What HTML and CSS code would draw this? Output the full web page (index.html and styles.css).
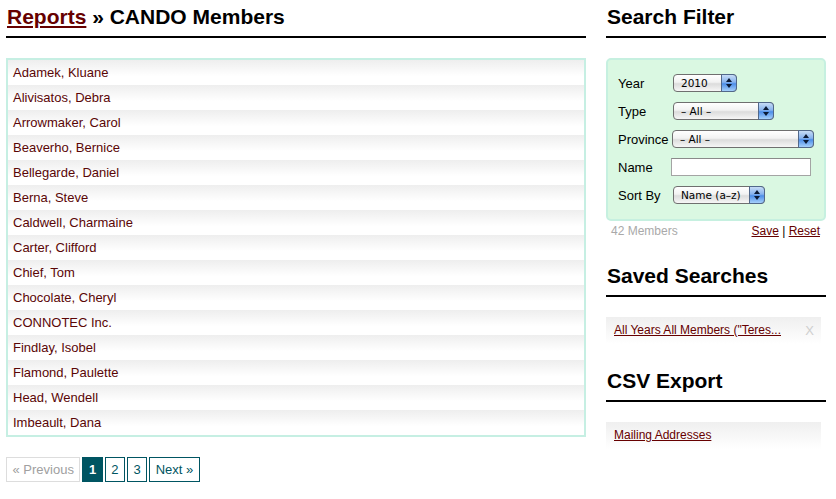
FILE: index.html
```html
<!DOCTYPE html>
<html>
<head>
<meta charset="utf-8">
<title>CANDO Members</title>
<link rel="stylesheet" href="styles.css">
</head>
<body>
<div class="page">
  <div class="main">
    <h1 class="heading"><a href="#" class="crumb">Reports</a> » CANDO Members</h1>
    <ul class="list">
      <li class="row"><a href="#">Adamek, Kluane</a></li>
      <li class="row"><a href="#">Alivisatos, Debra</a></li>
      <li class="row"><a href="#">Arrowmaker, Carol</a></li>
      <li class="row"><a href="#">Beaverho, Bernice</a></li>
      <li class="row"><a href="#">Bellegarde, Daniel</a></li>
      <li class="row"><a href="#">Berna, Steve</a></li>
      <li class="row"><a href="#">Caldwell, Charmaine</a></li>
      <li class="row"><a href="#">Carter, Clifford</a></li>
      <li class="row"><a href="#">Chief, Tom</a></li>
      <li class="row"><a href="#">Chocolate, Cheryl</a></li>
      <li class="row"><a href="#">CONNOTEC Inc.</a></li>
      <li class="row"><a href="#">Findlay, Isobel</a></li>
      <li class="row"><a href="#">Flamond, Paulette</a></li>
      <li class="row"><a href="#">Head, Wendell</a></li>
      <li class="row"><a href="#">Imbeault, Dana</a></li>
    </ul>
    <div class="pager">
      <span class="pg pg-disabled">« Previous</span>
      <span class="pg pg-current">1</span>
      <a href="#" class="pg">2</a>
      <a href="#" class="pg">3</a>
      <a href="#" class="pg">Next »</a>
    </div>
  </div>
  <div class="side">
    <h2 class="heading">Search Filter</h2>
    <form class="filter">
      <div class="frow">
        <label class="flabel">Year</label>
        <span class="sel-wrap w-year"><select class="sel"><option>2010</option></select><span class="sel-arrow"><i class="up"></i><i class="down"></i></span></span>
      </div>
      <div class="frow">
        <label class="flabel">Type</label>
        <span class="sel-wrap w-type"><select class="sel"><option>– All –</option></select><span class="sel-arrow"><i class="up"></i><i class="down"></i></span></span>
      </div>
      <div class="frow">
        <label class="flabel">Province</label>
        <span class="sel-wrap w-prov"><select class="sel"><option>– All –</option></select><span class="sel-arrow"><i class="up"></i><i class="down"></i></span></span>
      </div>
      <div class="frow">
        <label class="flabel">Name</label>
        <input class="name-input" type="text">
      </div>
      <div class="frow">
        <label class="flabel">Sort By</label>
        <span class="sel-wrap w-sort"><select class="sel"><option>Name (a–z)</option></select><span class="sel-arrow"><i class="up"></i><i class="down"></i></span></span>
      </div>
    </form>
    <div class="meta">
      <span class="count">42 Members</span>
      <span class="actions"><a href="#">Save</a> | <a href="#">Reset</a></span>
    </div>
    <h2 class="heading section">Saved Searches</h2>
    <div class="item">
      <a href="#">All Years All Members ("Teres...</a>
      <span class="close">X</span>
    </div>
    <h2 class="heading section">CSV Export</h2>
    <div class="item">
      <a href="#">Mailing Addresses</a>
    </div>
  </div>
</div>
</body>
</html>
```

FILE: styles.css
```css
* { box-sizing: border-box; }
body {
  margin: 0;
  background: #fff;
  font-family: "Liberation Sans", Arial, Helvetica, sans-serif;
  font-size: 13px;
  color: #000;
}
a { color: #660000; }
.page {
  display: flex;
  gap: 20px;
  padding: 0 10px 0 6px;
}
.main { width: 580px; }
.side { width: 220px; }

.heading {
  margin: 0;
  padding: 3px 0 5px 1px;
  font-size: 21px;
  line-height: 28px;
  font-weight: bold;
  border-bottom: 2px solid #000;
}
.crumb { color: #660000; }

.list {
  list-style: none;
  margin: 20px 0 0;
  padding: 0;
  border: 2px solid #c6efe3;
}
.row {
  height: 25px;
  line-height: 25px;
  padding-left: 5px;
  background: linear-gradient(#eeeeee, #ffffff 65%);
}
.row a {
  text-decoration: none;
  color: #5a0606;
}

.pager {
  display: flex;
  gap: 2px;
  margin-top: 20px;
}
.pg {
  display: block;
  height: 25px;
  line-height: 23px;
  padding: 0 5.5px;
  border: 1px solid #005562;
  color: #005562;
  text-decoration: none;
  font-size: 13px;
}
.pg-disabled {
  border-color: #dddddd;
  color: #a0a0a0;
}
.pg-current {
  background: #005562;
  color: #fff;
  font-weight: bold;
}

.filter {
  margin-top: 20px;
  background: #daf8e2;
  border: 2px solid #c6f0e0;
  border-radius: 5px;
  padding: 13px 10px 14px;
}
.frow {
  display: flex;
  align-items: center;
  height: 20px;
  margin-bottom: 8px;
}
.frow:last-child { margin-bottom: 0; }
.flabel {
  width: 55px;
  font-size: 13px;
}
.sel-wrap {
  position: relative;
  display: inline-block;
  height: 18px;
}
.w-year { width: 64px; }
.w-type { width: 101px; }
.w-prov { width: 145px; }
.w-sort { width: 92px; }
.sel {
  -webkit-appearance: none;
  appearance: none;
  width: 100%;
  height: 18px;
  margin: 0;
  padding: 0 18px 0 7px;
  border: 1px solid #6f6f6f;
  border-radius: 4px;
  background: linear-gradient(#ffffff, #f2f2f2 45%, #dcdcdc 55%, #f6f6f6);
  font-family: "DejaVu Sans", "Liberation Sans", sans-serif;
  font-size: 10.5px;
  color: #000;
  line-height: 16px;
}
.sel-arrow {
  position: absolute;
  top: 0;
  right: 0;
  width: 16px;
  height: 18px;
  border: 1px solid #51688a;
  border-radius: 0 4px 4px 0;
  background: linear-gradient(#c7dcf6, #86b2ee 45%, #4d8ee8 55%, #a6d0fb);
}
.sel-arrow .up, .sel-arrow .down {
  position: absolute;
  left: 4px;
  width: 0;
  height: 0;
  border-left: 3px solid transparent;
  border-right: 3px solid transparent;
}
.sel-arrow .up {
  top: 3px;
  border-bottom: 4px solid #0b1a35;
}
.sel-arrow .down {
  top: 9px;
  border-top: 4px solid #0b1a35;
}
.name-input {
  width: 140px;
  height: 18px;
  margin: 0 0 0 -2px;
  border: 1px solid #a4a4a4;
  border-top-color: #8a8a8a;
  background: #fff;
  padding: 0 3px;
}

.meta {
  display: flex;
  justify-content: space-between;
  margin-top: 2px;
  padding: 0 6px 0 5px;
  line-height: 16px;
  font-size: 12px;
}
.count { color: #a9a9a9; }
.actions { color: #000; }
.actions a { color: #660000; }

.section { margin-top: 20px; }

.item {
  display: flex;
  justify-content: space-between;
  width: 215px;
  height: 27px;
  line-height: 25px;
  margin-top: 20px;
  padding: 1px 7px 0 8px;
  background: linear-gradient(#efefef, #ffffff);
  font-size: 12px;
}
.item a { color: #660000; }
.close { color: #cfcfcf; font-size: 13px; }
```
